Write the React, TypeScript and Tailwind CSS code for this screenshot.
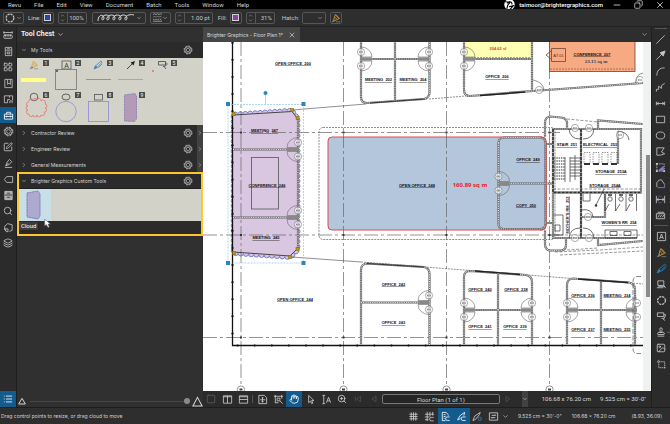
import type { ReactNode } from "react";
import {
  ChevronDown, ChevronRight, ChevronUp, Copy, Hand, Image as ImageIcon, Layers,
  LayoutGrid, List, Minus, RulerDimensionLine, Search, Square, Stamp, SquarePen, X, ZoomIn,
} from "lucide-react";

const ui = "font-['Roboto',sans-serif] text-[6px] leading-[8px]";
const small = "font-['Inter','Roboto',sans-serif] text-[5px] leading-[8px]";

function Glyph({ children, className = "size-[11px]" }: { children: ReactNode; className?: string }) {
  return (
    <svg viewBox="0 0 12 12" fill="none" stroke="currentColor" strokeWidth="0.9" className={"shrink-0 " + className} aria-hidden="true">
      {children}
    </svg>
  );
}

function Gear({ className }: { className?: string }) {
  return (
    <Glyph className={className}>
      <circle cx="6" cy="6" r="4.8" strokeWidth="0.9" strokeDasharray="2.2 1.57" />
      <circle cx="6" cy="6" r="4" strokeWidth="0.9" />
      <circle cx="6" cy="6" r="2.1" strokeWidth="0.8" />
    </Glyph>
  );
}

function Highlighter({ className }: { className?: string }) {
  return (
    <Glyph className={className}>
      <path d="M5 2 L9.5 7 L4.5 9 L3.3 7.5 Z" stroke="#d9a032" />
      <path d="M4.3 4.5 L7.2 7.8 M5.6 1.5 L10.6 7" stroke="#d9a032" />
      <path d="M1.5 10.5 L3.5 7.8 L5 9.4 Z M6 10.6 H11" stroke="#8a867c" fill="#8a867c" />
    </Glyph>
  );
}

function BluePen({ className }: { className?: string }) {
  return (
    <Glyph className={className}>
      <path d="M3 7 L9.5 1.2 L10.8 2.5 L5 9 Z M6.5 9 L11 4.5" stroke="#2b84c6" />
      <path d="M3 7 L5 9 L1.2 10.8 Z" fill="#2b84c6" stroke="#2b84c6" />
    </Glyph>
  );
}

/* ---------- Top bars ---------- */

function MenuBar() {
  const menus = ["Revu", "File", "Edit", "View", "Document", "Batch", "Tools", "Window", "Help"];
  return (
    <header className={"flex h-[9px] shrink-0 items-center bg-black text-[#d6d6d6] " + ui}>
      <nav className="flex gap-[13px] pl-2">
        {menus.map((m) => (
          <button key={m} type="button">{m}</button>
        ))}
      </nav>
      <div className="ml-auto flex items-center pr-[5px]">
        <svg viewBox="0 0 20 20" className="mr-[4px] size-[11px]" aria-hidden="true">
          <circle cx="10" cy="10" r="9.5" fill="#fff" />
          <path d="M2 5 L11 6 L7 11 L5 18 M6 8 C10 3 16 6 14 10 M9 14 L17 12 L11 19" stroke="#000" strokeWidth="2" fill="none" />
        </svg>
        <span className="mr-[9px] font-medium text-white">taimoor@brightergraphics.com</span>
        <button type="button" aria-label="Minimize" className="mr-[12px]"><Minus className="size-[10px]" /></button>
        <button type="button" aria-label="Restore" className="mr-[12px]"><Copy className="size-[9px] -scale-x-100" /></button>
        <button type="button" aria-label="Close"><X className="size-[10px]" /></button>
      </div>
    </header>
  );
}

const box = "flex h-[12px] shrink-0 items-center rounded-[2px] border border-[#565656]";

function Spinner({ label, value, width }: { label: string; value: string; width: string }) {
  return (
    <div className={box + " " + width}>
      <button type="button" aria-label={"Adjust " + label} className="flex h-full w-[9px] shrink-0 flex-col items-center justify-center border-r border-[#565656]">
        <ChevronUp className="size-[5px]" />
        <ChevronDown className="size-[5px]" />
      </button>
      <input aria-label={label} defaultValue={value} className="w-full min-w-0 bg-transparent pr-[2px] text-right outline-none" />
    </div>
  );
}

function PropertyBar() {
  return (
    <div className={"flex h-[18px] shrink-0 items-center gap-[4px] border-b border-[#222] bg-[#2e2e2e] pl-[3px] text-[#c8c8c8] " + ui}>
      <button type="button" aria-label="Shape" className={box + " w-[21px] justify-between px-px"}>
        <Glyph className="size-[10px]"><circle cx="6" cy="6" r="4.6" strokeWidth="1.5" strokeDasharray="2.6 1" /></Glyph>
        <ChevronDown className="size-[6px]" />
      </button>
      <span>Line:</span>
      <button type="button" aria-label="Line color" className={box + " -ml-[3px] w-[12px] justify-center"}>
        <span className="size-[7px] border border-[#d0d0d0] bg-[#2448a8]" />
      </button>
      <Spinner label="Line opacity" value="100%" width="w-[29px]" />
      <button type="button" aria-label="Line style" className={box + " ml-px w-[54px] justify-between pr-[3px] pl-[4px]"}>
        <svg viewBox="0 0 38 8" className="h-[8px] w-[38px]" fill="none" stroke="#ddd" aria-hidden="true">
          <path d="M1 7 C1 0 7 0 7 4 C7 7 4 6 5 4 C6 0 13 0 12 4 C12 7 9 6 10 4 C11 0 18 0 18 4 C18 7 15 6 16 4 C17 0 24 0 24 4 C24 7 21 6 22 4 C23 0 30 0 30 4 C30 7 27 6 28 4 C29 1 34 0 37 1" />
        </svg>
        <ChevronDown className="size-[6px]" />
      </button>
      <button type="button" aria-label="Line weight pattern" className={box + " w-[21px] justify-between px-[2px]"}>
        <Glyph className="size-[9px]"><path d="M0 2 l2 -1 l2 1 l2 -1 l2 1 l2 -1 l2 1 M0 11 H12" /><path d="M0 6 l2 -2 l2 2 l2 -2 l2 2 l2 -2 l2 2 M0 8.5 h12" strokeDasharray="2 1" /></Glyph>
        <ChevronDown className="size-[6px]" />
      </button>
      <Spinner label="Line width" value="1.00 pt" width="w-[38px]" />
      <span className="ml-px">Fill:</span>
      <button type="button" aria-label="Fill color" className={box + " -ml-px w-[12px] justify-center"}>
        <span className="size-[7px] border border-[#d0d0d0] bg-[#8c3fa5]" />
      </button>
      <Spinner label="Fill opacity" value="31%" width="w-[29px]" />
      <label htmlFor="hatch" className="ml-[3px]">Hatch:</label>
      <div className={box + " -ml-px w-[24px] pr-[2px]"}>
        <select id="hatch" className="h-full w-full min-w-0 appearance-none bg-transparent outline-none"><option /></select>
        <ChevronDown className="pointer-events-none size-[6px] shrink-0" />
      </div>
      <button type="button" aria-label="Set as default" className={box + " w-[12px] justify-center"}>
        <Highlighter className="size-[10px]" />
      </button>
    </div>
  );
}

/* ---------- Left side ---------- */

function LeftRail() {
  const ic = "size-[10px]";
  const items: [string, ReactNode][] = [
    ["Measurements", <RulerDimensionLine className={ic} />],
    ["File access", <Glyph><path d="M2.5 1.5 H9.5 V10.5 H2.5 Z M2.5 4.5 H9.5 M4.5 3 H7.5 M4.5 6.5 H7.5 V8.5 H4.5 Z" /></Glyph>],
    ["Thumbnails", <LayoutGrid className={ic} />],
    ["Bookmarks", <Glyph><path d="M2 1.5 H10 V10.5 H2 Z M5 1.5 V7 L6.5 5.5 L8 7 V1.5" /></Glyph>],
    ["Spaces", <Glyph><path d="M1.5 2 H10.5 V7 M1.5 2 V9.5 H5 V6 H7.5 M7 2 V4 M10 10 V7.5 H7.5 V10" /></Glyph>],
    ["Tool Chest", <Glyph><path d="M1.5 4.5 H10.5 V10 H1.5 Z M4 4.5 V2.5 H8 V4.5 M1.5 7 H10.5 M4 6.2 V8 M8 6.2 V8" /></Glyph>],
    ["Properties", <Gear />],
    ["Forms", <SquarePen className={ic} />],
    ["Signatures", <Glyph><path d="M2 10.3 H10 M3 8.5 L4.5 4.5 L7 1.5 L9.5 4 L7 7 Z M3 8.5 L6 5.3" /></Glyph>],
    ["Links", <Glyph><path d="M1.5 6 L4 2.8 H10.5 V9.2 H4 Z" /></Glyph>],
    ["Studio", <Glyph><path d="M2 1.5 H10 V10.5 H2 Z" fill="#aaa" /><path d="M2 5.5 H10 M4.5 3.5 H7.5 M4.5 8 H7.5" stroke="#333" /></Glyph>],
    ["Search", <Search className={ic} />],
    ["Compare", <Glyph><path d="M3.5 9.5 A4.5 4.5 0 0 1 2 4.5 L5 1.8 L10 3 V9 L7 10.3 M1.5 7.5 H5.5 V10.5 H3.5 Z" /></Glyph>],
    ["Layers", <Layers className={ic} />],
  ];
  return (
    <nav className="flex w-4 shrink-0 flex-col bg-[#2b2b2b] text-[#c4c4c4]">
      {items.map(([label, icon]) => (
        <button key={label} type="button" aria-label={label} className={"flex h-4 w-full items-center justify-center " + (label === "Tool Chest" ? "bg-[#135a8d] text-white" : "")}>
          {icon}
        </button>
      ))}
      <button type="button" aria-label="Markups list" className="mt-auto flex h-4 w-full items-center justify-center bg-[#135a8d] text-white">
        <List className={ic} />
      </button>
    </nav>
  );
}

const toolArt: [string, ReactNode][] = [
  ["Highlight", <><svg x="11" y="2" width="10" height="10"><Highlighter className="size-[10px]" /></svg><rect x="3" y="20" width="25" height="4" fill="#ffff8c" /></>],
  ["Text box", <><rect x="12" y="3" width="9" height="8" stroke="#555" /><text x="16.5" y="9.5" textAnchor="middle" className="fill-[#333] font-['Roboto',sans-serif] text-[7px]">A</text><rect x="5.5" y="11.5" width="21" height="20" stroke="#77776f" /><path d="M6 12 h2 v2 h-2z" fill="#666" /></>],
  ["Pen", <><svg x="11" y="2" width="10" height="10"><BluePen className="size-[10px]" /></svg><path d="M4 21.5 H29" stroke="#e8706c" strokeWidth="1" /></>],
  ["Arrow", <><path d="M13 11 L19 5" stroke="#222" /><path d="M21 3 L16.5 4.5 L19.5 7.5 Z" fill="#222" /><path d="M4 21.5 H29" stroke="#e58f88" strokeWidth="1" /></>],
  ["Callout", <><path d="M12.5 3.5 H19.5 V7 H12.5 Z M19.5 5 C23 5 20 9 17 8.5 M18 8.5 L20 11" stroke="#444" /><circle cx="7" cy="13" r="1" fill="#ee6a66" /></>],
  ["Cloud", <><circle cx="16" cy="7" r="3.8" stroke="#444" /><path d="M11 11 a2 2 0 0 1 4 0 a2 2 0 0 1 4 -1 a2 2 0 0 1 4 1 a2 2 0 0 1 4 3 a2 2 0 0 1 0 4 a2 2 0 0 1 -1 4 a2 2 0 0 1 -3 3 a2 2 0 0 1 -4 0 a2 2 0 0 1 -4 0 a2 2 0 0 1 -4 -1 a2 2 0 0 1 -1 -4 a2 2 0 0 1 0 -4 a2 2 0 0 1 1 -4" stroke="#e8706c" /></>],
  ["Ellipse", <><ellipse cx="16" cy="7" rx="4" ry="3" stroke="#444" /><circle cx="16" cy="21.5" r="10.2" stroke="#8a8ad8" /></>],
  ["Rectangle", <><rect x="12.5" y="4.5" width="8" height="5.5" stroke="#555" /><rect x="6.5" y="11.5" width="20" height="20" stroke="#8a8ad8" /></>],
  ["Custom cloud", <path d="M10.5 5 L21 3.5 L22.5 6 V29 L20.5 31.5 L10.5 31 Z" fill="#b49ab6" stroke="#7d7bb4" strokeDasharray="2 0.6" />],
];

function SectionHeader({ title, open = false, handle = false, framed = false }: { title: string; open?: boolean; handle?: boolean; framed?: boolean }) {
  const Chevron = open ? ChevronDown : ChevronRight;
  return (
    <div className={"flex items-center bg-[#2b2b2b] " + (framed ? "h-[14px]" : "h-4")}>
      <button type="button" aria-expanded={open} className={"flex flex-1 items-center gap-[4px] text-left text-[#d4d4d4] " + small + (framed ? " pl-[2px]" : " pl-[4px]")}>
        <Chevron className="size-[6px]" />
        {title}
      </button>
      <button type="button" aria-label={title + " settings"} className="mr-[4px] text-[#c9c9c9]"><Gear className="size-[10px]" /></button>
      {handle ? (
        <span className="flex h-full w-[6px] items-center justify-center bg-[#414141] text-[#c9c9c9]"><ChevronRight className="size-[6px]" /></span>
      ) : (
        <span className={framed ? "w-[4px]" : "w-[6px]"} />
      )}
    </div>
  );
}

function ToolChest() {
  return (
    <aside className="flex w-[187px] shrink-0 flex-col border-l border-[#1f1f1f] bg-[#303030]">
      <button type="button" className="flex h-[15px] shrink-0 items-center gap-[2px] pl-[4px] font-['Roboto',sans-serif] text-[7px] leading-[9px] font-bold text-[#eee]">
        Tool Chest <ChevronDown className="size-[7px]" />
      </button>
      <div className="flex flex-col">
        <SectionHeader title="My Tools" open />
        <div className="grid grid-cols-[repeat(5,32px)] bg-[#d3d2c8] pb-[3px] pl-px">
          {toolArt.map(([label, art], i) => (
            <button key={label} type="button" aria-label={label} className="h-8 w-8">
              <svg viewBox="0 0 32 32" className="size-8 overflow-visible" fill="none" strokeWidth="0.8" aria-hidden="true">
                {art}
                <rect x="25" y="2" width="6" height="6" fill="#4a4a48" />
                <text x="28" y="6.6" textAnchor="middle" className="fill-white font-['Roboto',sans-serif] text-[5px]">{i + 1}</text>
              </svg>
            </button>
          ))}
        </div>
        <SectionHeader title="Contractor Review" handle />
        <SectionHeader title="Engineer Review" handle />
        <SectionHeader title="General Measurements" handle />
      </div>
      <section className="-mt-px flex flex-col border-2 border-[#fdc52f] bg-[#2b2b2b] pb-[13px]">
        <SectionHeader title="Brighter Graphics Custom Tools" open framed />
        <div className="relative flex border-t border-[#1f1f1f] bg-[#d3d2c8]">
          <button type="button" aria-label="Cloud" className="size-8 bg-[#c9dfe8]">
            <svg viewBox="0 0 32 32" className="size-8" aria-hidden="true">
              <path d="M8 4 L19 2 L21 5 V27 L19 30 L8 28 Z" fill="#aea9cf" stroke="#7b80bb" strokeDasharray="2 0.5" />
            </svg>
          </button>
          <svg viewBox="0 0 12 16" className="absolute top-[30px] left-[25px] z-10 h-[9px] w-[7px]" aria-hidden="true">
            <path d="M1 0 V12 L4 10 L7 15 L9 14 L7 9 H11 Z" fill="#fff" stroke="#666" />
          </svg>
          <span role="tooltip" className={"absolute top-[33px] left-0 bg-[#3d3d3d] px-[2px] text-white shadow " + ui}>Cloud</span>
        </div>
      </section>
      <div className="mt-auto flex h-[12px] items-center gap-[4px] pl-px text-[#d5d5d5]">
        <Glyph className="size-[8px]"><path d="M6 2 L11 10.5 H1 Z" strokeWidth="1.5" /></Glyph>
        <input type="range" aria-label="Thumbnail size" defaultValue={100} className="h-[7px] min-w-0 flex-1 appearance-none bg-transparent [&::-webkit-slider-runnable-track]:h-px [&::-webkit-slider-runnable-track]:bg-[#474747] [&::-webkit-slider-thumb]:-mt-[3px] [&::-webkit-slider-thumb]:size-[6px] [&::-webkit-slider-thumb]:appearance-none [&::-webkit-slider-thumb]:rounded-full [&::-webkit-slider-thumb]:bg-[#8a8a8a]" />
        <Glyph className="-ml-[2px] size-[11px]"><path d="M6 1.5 L11 11 H1 Z" strokeWidth="1.1" /></Glyph>
      </div>
    </aside>
  );
}

/* ---------- Floor plan drawing ---------- */

function Wall({ d }: { d: string }) {
  return (
    <g fill="none">
      <path d={d} stroke="#646464" strokeWidth="2.2" />
      <path d={d} stroke="#dcdcdc" strokeWidth="1.2" strokeDasharray="1 0.8" />
    </g>
  );
}

function Room({ x, y, children, rotate = false }: { x: number; y: number; children: string; rotate?: boolean }) {
  return (
    <text
      x={x} y={y + 1.5} textAnchor="middle" fill="#111" textDecoration="underline" xmlSpace="preserve"
      transform={rotate ? `rotate(-90 ${x} ${y})` : undefined}
      className="font-['Liberation_Sans',sans-serif] text-[4px] font-bold whitespace-pre"
    >
      {children}
    </text>
  );
}

function DoorTag({ x, y }: { x: number; y: number }) {
  return (
    <g>
      <circle cx={x} cy={y} r="3.6" fill="#fff" fillOpacity="0.6" stroke="#777" strokeWidth="0.6" />
      <path d={`M${x - 2} ${y} H${x + 2}`} stroke="#888" strokeWidth="1.3" strokeDasharray="1 0.4" />
    </g>
  );
}

/* A pair of doors hung on both sides of a partition; dir 1 opens right, -1 opens left. */
function Doors({ x, y, dir }: { x: number; y: number; dir: 1 | -1 }) {
  const e = x + dir * 11;
  const s = dir === 1 ? 1 : 0;
  return (
    <g fill="none" stroke="#666" strokeWidth="0.6">
      <path d={`M${x} ${y - 12} A11 10 0 0 ${s} ${e} ${y - 2} H${x} M${x} ${y + 12} A11 10 0 0 ${1 - s} ${e} ${y + 2} H${x}`} />
      <path d={`M${x} ${y} H${e}`} stroke="#888" strokeWidth="3.4" />
      <DoorTag x={x} y={y - 7} />
      <DoorTag x={x} y={y + 7} />
    </g>
  );
}

const zone: [number, number][] = [[233, 114], [292, 110], [298, 118], [298, 249], [290, 257], [233, 253]];

function scallops(points: [number, number][]) {
  let d = `M${points[0][0]} ${points[0][1]}`;
  points.forEach(([x0, y0], i) => {
    const [x1, y1] = points[(i + 1) % points.length];
    const n = Math.max(1, Math.round(Math.hypot(x1 - x0, y1 - y0) / 5));
    for (let k = 1; k <= n; k++) {
      d += ` A2.6 2.6 0 0 1 ${x0 + ((x1 - x0) * k) / n} ${y0 + ((y1 - y0) * k) / n}`;
    }
  });
  return d + " Z";
}

function FloorPlan() {
  const columns = [241, 343.5, 446.5, 549.5];
  const rows = [132.5, 235, 337.5];
  return (
    <svg viewBox="203 42 440 349" preserveAspectRatio="xMinYMin slice" className="block h-full w-full bg-white" role="img" aria-label="Floor plan">
      {/* tinted areas */}
      <rect x="464" y="42" width="68" height="17" fill="#ffffb4" />
      <rect x="549.5" y="40" width="85.5" height="31.5" fill="#f7a981" stroke="#6b4636" strokeWidth="0.8" />
      <path d="M550 69 H635" stroke="#7a4c38" strokeWidth="0.6" strokeDasharray="2 1" />
      <rect x="328" y="137" width="218" height="93" rx="4" fill="#b3c6dc" stroke="#e5484d" />
      <path d={scallops(zone)} fill="#d9c7e2" stroke="#6a74c4" strokeWidth="0.9" />

      {/* structural grid */}
      <g stroke="#666" strokeWidth="0.7" strokeDasharray="14 3 3 3">
        {columns.map((x) => <path key={x} d={`M${x} 42 V386`} />)}
        {rows.map((y) => <path key={y} d={`M203 ${y} H${y > 300 ? 643 : 560}`} />)}
      </g>
      {columns.map((x) => (
        <g key={x}>
          <circle cx={x} cy="389.5" r="3.6" fill="#fff" stroke="#666" strokeWidth="0.7" />
          <path d={`M${x - 1.5} 389.5 H${x + 1.5}`} stroke="#444" strokeWidth="2" />
          {rows.map((y) => <path key={y} d={`M${x - 1} ${y - 1} h2 v2 h-2 z`} fill="#333" />)}
        </g>
      ))}

      {/* outer walls */}
      <path d="M232.5 42 V345.5 H643" fill="none" stroke="#111" strokeWidth="1.3" />
      <path d="M232.5 42 V345.5 H643" fill="none" stroke="#111" strokeWidth="2.2" strokeDasharray="1.5 15.6" />
      <g fill="none" stroke="#444" strokeWidth="0.6">
        <path d="M292 110 L366 104 M292 257 L361 262" />
        <path d="M429 99 L466 96 M361 262 L643 284" strokeDasharray="2 1" />
        <rect x="319" y="127.5" width="236" height="112" rx="4" strokeDasharray="2 1" />
      </g>

      {/* selected zone contents */}
      <Wall d="M233 149.5 H298 M233 217.5 H298 M298 118 V249" />
      <path d="M233 115 L292 111.5 L297 118 M297 249 L290 256 L233 252" fill="none" stroke="#444" />
      <rect x="251.5" y="157.5" width="27" height="51.5" fill="none" stroke="#555" strokeWidth="0.8" />
      <Doors x={298} y={149.5} dir={-1} />
      <Doors x={298} y={217.5} dir={-1} />

      {/* north rooms */}
      <Wall d="M361 42 V97 Q361 103 367 103 L424 99 Q429.5 98 429.5 92 V42 M395 42 V101 M361 59 H429" />
      <path d="M370 103 L424 99" stroke="#333" />
      <Doors x={361} y={59} dir={1} />
      <Doors x={429} y={59} dir={-1} />
      <Wall d="M464 42 V90 Q464 96 470 96 L532 91 V42 M464 59 H532 M533 91 L643 83" />
      <path d="M480 95.5 L525 92" stroke="#222" strokeWidth="1.5" />
      <path d="M465 57.5 H531" stroke="#c77" strokeWidth="0.8" strokeDasharray="2 1" />
      <Doors x={464} y={59} dir={1} />
      <path d="M533 80 Q543 82 544 90 M643 73 Q636 74 635.5 83" fill="none" stroke="#666" strokeWidth="0.7" />
      <DoorTag x={539} y={90} />
      <DoorTag x={640} y={80} />
      <path d="M551.5 48.5 H565.5 V61.5 H551.5 Z M551 51 L546 55 L551 59" fill="none" stroke="#6b4636" strokeWidth="0.8" />

      {/* middle rooms */}
      <Wall d="M498.5 143 Q498.5 137.5 504 137.5 H540 Q545.5 138 545.5 143 V224 Q545 229 540 229 H504 Q498.5 229 498.5 224 Z M498.5 183.5 H553" />
      <Doors x={498.5} y={183.5} dir={1} />
      <path d="M540 137 Q546 137 546 143 V224 Q546 230 540 230" fill="none" stroke="#e5484d" />

      {/* service core */}
      <Wall d="M567 128 V122 Q566 118 561 117.5 L550 116.5 Q545 117 545 123 V137 M545 230 V244 Q545 250 550 250.5 H561 Q566 250 566 245 V239 M545 144 H553 M545 223 H553 M643 124 L598 120.5 V128 M643 241 L598 245 V239" />
      <Wall d="M553 129 H641 V192.5 H553 Z V238 H637 M581 129 V238 M618 131 V164 M605 193 V217 H581" />
      <path d="M553 129 V192.5 H641 M581 129 V238" fill="none" stroke="#333" strokeWidth="1.6" strokeDasharray="3 1" />
      <g fill="none" stroke="#333" strokeWidth="0.7">
        <path d="M567 119 L598 122 M567 250 L598 248 M555 252 L600 250 L643 247 M560 255 L643 251 M553 189 H641 M547 235 H643" strokeDasharray="3 1.5" strokeWidth="0.5" />
        <path d="M554 158 H565 M554 161 H565 M554 164 H565 M554 167 H565 M554 170 H565 M554 173 H565 M554 176 H565 M554 179 H565" strokeWidth="1.2" strokeDasharray="1.5 0.8" />
        <path d="M570 158 H580 M570 161 H580 M570 164 H580 M570 167 H580 M570 170 H580 M570 173 H580 M570 176 H580 M570 157 V182 M575 155 V180 M565 157 V182" />
        <path d="M584 152.5 H590 V164 H584 Z M593 152.5 H599 V164 H593 Z M602 152.5 H608 V164 H602 Z M611 152.5 H617 V164 H611 Z" strokeDasharray="1.5 1" strokeWidth="0.5" />
        <path d="M584 164 H590 M593 164 H599 M602 164 H608 M611 164 H617" strokeWidth="2" />
        <path d="M605 194 V211 M615.5 194 V211 M626 194 V211 M636.5 194 V211 M605 211 L609 204 M615.5 211 L620 204 M626 211 L630 204" />
        <circle cx="610" cy="199" r="2.2" /><circle cx="621" cy="199" r="2.2" /><circle cx="631" cy="199" r="2.2" />
        <path d="M608 195 h4 M619 195 h4 M629 195 h4" strokeWidth="1.5" />
        <path d="M605 230 H637 V238 H605 Z M610 231.5 h7 v4 h-7 z M624 231.5 h7 v4 h-7 z M554 215 h9 v20 h-9 M555 225 h5 v6 h-5 z" />
        <path d="M604 189 L596 205 M583 194 V201 H590 V194 M618 131 Q628 132 629 140 M581 210 Q592 208 593 217" />
        <circle cx="596" cy="205.5" r="0.9" fill="#111" />
        <path d="M569 129 Q570 139 580 139 M583 139 Q593 139 594 129 M569 238 Q570 228 580 228 M583 228 Q593 228 594 238" />
      </g>
      <DoorTag x={575} y={128} /><DoorTag x={589} y={128} /><DoorTag x={620} y={135} />
      <DoorTag x={588} y={217} /><DoorTag x={575} y={238} /><DoorTag x={589} y={238} />

      {/* south rooms */}
      <Wall d="M361 345 V270 Q361 264 367 263.5 L424 267 Q429.5 268 429.5 274 V345 M361 302.5 H429" />
      <path d="M367 263.5 L424 267" stroke="#333" />
      <Doors x={429} y={302.5} dir={-1} />
      <Wall d="M464 345 V277 Q464 271 470 271 L526 275 Q532 276 532 282 V345 M498 273 V345 M464 310 H532" />
      <path d="M475 271 L520 274.5" stroke="#222" strokeWidth="1.3" />
      <Doors x={464} y={310} dir={1} />
      <Doors x={532} y={310} dir={-1} />
      <Wall d="M567 345 V285 Q567 279 573 278.5 L629 282.5 Q635 284 635 289 V345 M601 281 V345 M567 310 H635" />
      <path d="M578 279 L628 282.5" stroke="#222" strokeWidth="1.3" />
      <Doors x={567} y={310} dir={1} />
      <Doors x={637} y={310} dir={-1} />
      <path d="M641 276.5 H637 Q633 277 633 281 V349 Q633 353 637 353.5 H641" fill="none" stroke="#555" strokeWidth="0.7" strokeDasharray="5 1.5" />

      {/* labels */}
      <Room x={293} y={63}>{"OPEN OFFICE  200"}</Room>
      <Room x={378.5} y={79.5}>{"MEETING  202"}</Room>
      <Room x={413} y={79.5}>{"MEETING  204"}</Room>
      <Room x={497} y={76.5}>{"OFFICE  206"}</Room>
      <Room x={592} y={54}>{"CONFERENCE  207"}</Room>
      <Room x={264.5} y={130.5}>{"MEETING  247"}</Room>
      <Room x={267} y={185}>{"CONFERENCE  246"}</Room>
      <Room x={266} y={237.5}>{"MEETING  245"}</Room>
      <Room x={417} y={185}>{"OPEN OFFICE  248"}</Room>
      <Room x={528} y={159.5}>{"OFFICE  249"}</Room>
      <Room x={526} y={205}>{"COPY  250"}</Room>
      <Room x={567} y={144.5}>{"STAIR  251"}</Room>
      <Room x={600} y={144.5}>{"ELECTRICAL  253"}</Room>
      <Room x={611} y={171.5}>{"STORAGE  253A"}</Room>
      <Room x={605} y={185}>{"STORAGE  254A"}</Room>
      <Room x={619} y={222.5}>{"WOMEN'S RR  254"}</Room>
      <Room x={567} y={215} rotate>{"MOTHER'S RM  252"}</Room>
      <Room x={295} y={299}>{"OPEN OFFICE  244"}</Room>
      <Room x={393.5} y={284}>{"OFFICE  242"}</Room>
      <Room x={393.5} y={322.5}>{"OFFICE  243"}</Room>
      <Room x={480} y={289}>{"OFFICE  240"}</Room>
      <Room x={516} y={289}>{"OFFICE  238"}</Room>
      <Room x={480} y={326.5}>{"OFFICE  241"}</Room>
      <Room x={515} y={326.5}>{"OFFICE  239"}</Room>
      <Room x={583} y={295}>{"OFFICE  236"}</Room>
      <Room x={617} y={295}>{"MEETING  234"}</Room>
      <Room x={583} y={329}>{"OFFICE  237"}</Room>
      <Room x={617} y={329}>{"MEETING  235"}</Room>
      <text x="498" y="50" textAnchor="middle" className="fill-[#e03c31] font-['Liberation_Sans',sans-serif] text-[4px] font-bold">204.62 sf</text>
      <text x="596" y="63" textAnchor="middle" className="fill-[#2c4a66] font-['Liberation_Serif',serif] text-[5px] font-bold">23.15 sq m</text>
      <text x="558.5" y="56.5" textAnchor="middle" className="fill-[#4a2c20] font-['Liberation_Sans',sans-serif] text-[4px]">A7.01</text>
      <text x="470" y="187" textAnchor="middle" className="fill-[#ee1c25] font-['Open_Sans',sans-serif] text-[6px] font-bold">160.89 sq m</text>

      {/* selection frame and handles */}
      <rect x="228" y="104.5" width="75.5" height="158.5" fill="none" stroke="#8cc4ea" strokeWidth="0.7" strokeDasharray="2 1" />
      <path d="M265.5 94 V104" stroke="#8cc4ea" strokeWidth="0.7" />
      <circle cx="265.5" cy="93" r="2" fill="#2f84c0" />
      {[[228, 104], [303.5, 104], [228, 263], [303.5, 263]].map(([x, y]) => (
        <rect key={x + "-" + y} x={x - 2} y={y - 2} width="4" height="4" fill="#2f84c0" />
      ))}
      {[[233.5, 114], [292, 110], [297.5, 118], [297.5, 249], [290, 257], [234, 253]].map(([x, y]) => (
        <rect key={x + "-" + y} x={x - 1.5} y={y - 1.5} width="3.2" height="3.2" fill="#b8921c" stroke="#7d6210" strokeWidth="0.5" />
      ))}
    </svg>
  );
}

/* ---------- Document area ---------- */

function NavButton({ label, active = false, dim = false, children }: { label: string; active?: boolean; dim?: boolean; children: ReactNode }) {
  return (
    <button type="button" aria-label={label} className={"flex h-4 w-4 shrink-0 items-center justify-center " + (active ? "bg-[#135a8d] text-white" : dim ? "text-[#5c5c5c]" : "text-[#cfcfcf]")}>
      {children}
    </button>
  );
}

function NavigationBar() {
  const ic = "size-[10px]";
  return (
    <div className={"flex h-4 shrink-0 items-center bg-[#2b2b2b] text-[#d8d8d8] " + ui}>
      <NavButton label="Unsplit" dim><Square className={ic} /></NavButton>
      <NavButton label="Split vertical"><Glyph><path d="M1.5 2 H10.5 V10 H1.5 Z M6 2 V10 M1.5 3 H10.5" /></Glyph></NavButton>
      <NavButton label="Split horizontal"><Glyph><path d="M1.5 2 H10.5 V10 H1.5 Z M1.5 6 H10.5 M1.5 3 H10.5" /></Glyph></NavButton>
      <span className="mx-px h-[8px] w-px bg-[#555]" />
      <NavButton label="Fit page"><Glyph><path d="M2 1.5 H8 L10.5 4 V10.5 H2 Z M6 3.5 V9 M3.5 6.3 H9 M5 4.5 L6 3.5 L7 4.5 M5 8 L6 9 L7 8" /></Glyph></NavButton>
      <NavButton label="Fit content"><Glyph><path d="M1 2.5 H11 M2.5 1 V10 M9.5 1 V5 M2.5 9.5 H6 M4.5 4.5 H7.5 V7.5 H4.5 Z M7.5 7.5 L10.5 10.5" /></Glyph></NavButton>
      <NavButton label="Pan" active><Hand className={ic} /></NavButton>
      <NavButton label="Select"><Glyph><path d="M4 1.5 V9.5 L6 7.8 L7.3 10.5 L8.5 10 L7.3 7.2 H9.8 Z" /></Glyph></NavButton>
      <NavButton label="Select text"><Glyph><path d="M1.5 1.5 H4.5 M3 1.5 V10.5 M1.5 10.5 H4.5 M6 9.5 L8.2 3.5 L10.5 9.5 M6.8 7.5 H9.7" /></Glyph></NavButton>
      <NavButton label="Zoom"><ZoomIn className={ic} /></NavButton>
      <NavButton label="First page" dim><Glyph className="size-[8px]"><path d="M2 2 V10 M10 2 L4 6 L10 10 Z" /></Glyph></NavButton>
      <NavButton label="Previous page" dim><Glyph className="size-[8px]"><path d="M9 2 L3 6 L9 10 Z" /></Glyph></NavButton>
      <input aria-label="Page" defaultValue="Floor Plan (1 of 1)" className="h-[10px] min-w-0 flex-1 rounded-[2px] border border-[#777] bg-[#262626] text-center outline-none" />
      <NavButton label="Next page" dim><Glyph className="size-[8px]"><path d="M3 2 L9 6 L3 10 Z" /></Glyph></NavButton>
      <button type="button" aria-label="More pages" className="ml-[6px] flex h-full w-[6px] items-center justify-center bg-[#414141]"><ChevronDown className="size-[6px]" /></button>
      <span className="ml-[14px]">106.68 x 76.20 cm</span>
      <span className="mr-[5px] ml-[9px]">9.525 cm = 30'-0"</span>
    </div>
  );
}

function DocumentArea() {
  return (
    <main className="flex min-w-0 flex-1 flex-col">
      <div className="flex h-[15px] shrink-0 items-stretch bg-[#2e2e2e]">
        <div className={"flex items-center bg-[#474747] pr-[4px] pl-[4px] text-[#dadada] " + small}>
          <button type="button">Brighter Graphics - Floor Plan 1*</button>
          <button type="button" aria-label="Close tab" className="ml-[5px]"><X className="size-[8px]" /></button>
        </div>
        <button type="button" aria-label="Open documents" className="mr-[3px] ml-auto text-[#ccc]"><ChevronDown className="size-[7px]" /></button>
      </div>
      <div className="flex min-h-0 flex-1">
        <div className="min-w-0 flex-1"><FloorPlan /></div>
        <div className="w-2 shrink-0 bg-[#f0f1f1] pl-[3px]">
          <div className="mt-[113px] h-[142px] w-[4px] bg-[#8b8b8b]" />
        </div>
      </div>
      <NavigationBar />
    </main>
  );
}

function RightRail() {
  const ic = "size-[10px]";
  const corner = <path d="M1 1 h2 v2 h-2z M1 9 h2 v2 h-2z M9 9 h2 v2 h-2z" fill="currentColor" stroke="none" />;
  const shapes: [string, ReactNode][] = [
    ["Line", <Glyph><path d="M1.5 10.5 L10.5 1.5" /></Glyph>],
    ["Arrow", <Glyph><path d="M1.5 10.5 L8 4" /><path d="M11 1 L5.5 3 L9 6.5 Z" fill="currentColor" /></Glyph>],
    ["Arc", <Glyph><path d="M2 10.5 C2 5 5 2 10.5 2" /></Glyph>],
    ["Polyline", <Glyph><path d="M1.5 10.5 V8 H4 V4.5 L7 7 V4 L10.5 1.5" /></Glyph>],
    ["Dimension", <Glyph><path d="M1.5 4 V8 M10.5 4 V8 M2 6 H10 M4 4.8 L2 6 L4 7.2 M8 4.8 L10 6 L8 7.2" /></Glyph>],
    ["Rectangle", <Glyph><path d="M1.5 2.5 H10.5 V9.5 H1.5 Z" /></Glyph>],
    ["Ellipse", <Glyph><ellipse cx="6" cy="6" rx="4.6" ry="3.8" /></Glyph>],
    ["Polygon", <Glyph><path d="M2 2 H10 L7 6.5 L10.5 8.5 L6 10 H2 Z" /></Glyph>],
    ["Area measurement", <Glyph><path d="M2 2 H10 V10 H2 Z" strokeDasharray="1.5 1" /><path d="M4 9 L9 9 L9 5 Z" stroke="#8d7bd8" fill="#8d7bd8" />{corner}</Glyph>],
    ["Perimeter", <Glyph><path d="M2 10 V5 L5 2 H7 L10.5 7" /><path d="M3 10.5 H10.5 V7" stroke="#8d7bd8" /></Glyph>],
    ["Length", <Glyph><path d="M1.5 2 V10 M10.5 2 V10 M2 6 H10 M4 4.5 L2 6 L4 7.5 M8 4.5 L10 6 L8 7.5" /><path d="M4 2.5 H8 M4 9.5 H8" stroke="#8d7bd8" strokeDasharray="1 1" /></Glyph>],
    ["Count", <Glyph><path d="M1.5 4 H10.5 V9.5 H1.5 Z M3 8 L5 5 M5.5 8 L7.5 5 M8 8 L10 5 M3 2.5 H10" /></Glyph>],
  ];
  const markups: [string, ReactNode][] = [
    ["Text box", <Glyph><path d="M1.5 1.5 H10.5 V10.5 H1.5 Z M4 8.7 L6 3.3 L8 8.7 M4.7 7 H7.3" /></Glyph>],
    ["Highlight", <Highlighter />],
    ["Pen", <BluePen />],
    ["Typewriter", <Glyph><path d="M2 2 H8.5 V7 H2 Z M1 9.5 H8 M8.5 7 L10.5 10 M2.5 8 H10" /></Glyph>],
    ["Cloud", <Glyph><circle cx="6" cy="6" r="4.3" strokeWidth="1.3" strokeDasharray="2.6 0.8" /></Glyph>],
    ["Callout", <Glyph><path d="M1.5 2 H8.5 V6 H1.5 Z M8.5 4 H10.5 L9 8 H6 M7.5 8.5 L10 10.5" /></Glyph>],
    ["Stamp", <><Stamp className={ic} /><ChevronDown className="-mr-[4px] size-[5px]" /></>],
    ["Image", <ImageIcon className={ic} />],
    ["Snapshot", <Glyph><path d="M1 3 H9.5 V11 M3 1 V9.5 H11" strokeDasharray="1.6 0.7" /></Glyph>],
  ];
  const cell = "flex h-4 w-full items-center justify-center";
  return (
    <nav className="flex w-[19px] shrink-0 flex-col border-l border-[#1f1f1f] bg-[#2b2b2b] text-[#c8c8c8]">
      <span className="mx-[3px] mt-px h-px bg-[#555]" />
      <div className="flex flex-col pt-[2px] pr-[2px]">
        {shapes.map(([label, icon]) => <button key={label} type="button" aria-label={label} className={cell}>{icon}</button>)}
      </div>
      <span className="mx-[2px] mt-[2px] h-px bg-[#555]" />
      <div className="flex flex-col pt-[2px]">
        {markups.map(([label, icon]) => <button key={label} type="button" aria-label={label} className={cell}>{icon}</button>)}
      </div>
    </nav>
  );
}

function StatusBar() {
  return (
    <footer className={"flex h-[17px] shrink-0 items-center border-t border-[#1d1d1d] bg-[#2e2e2e] pr-[8px] text-[#d2d2d2] " + small}>
      <span className="pl-px">Drag control points to resize, or drag cloud to move</span>
      <div className="ml-auto flex items-center">
        <NavButton label="Show grid"><Glyph><path d="M3.5 1.5 V10.5 M6 1.5 V10.5 M8.5 1.5 V10.5 M1.5 3.5 H10.5 M1.5 6 H10.5 M1.5 8.5 H10.5" /></Glyph></NavButton>
        <NavButton label="Snap to grid"><Glyph><path d="M3.5 1 V11 M6.5 1 V6 M9.5 1 V5 M1 3.5 H11 M1 6.5 H6 M1 9.5 H5 M10.5 7 H8 A1.8 1.8 0 0 0 8 10.8 H10.5" /></Glyph></NavButton>
        <NavButton label="Snap to content" active><Glyph><path d="M6 10.5 H2.5 V1.5 H6.5 L9 4 V5 M10.5 6.5 H8 A1.8 1.8 0 0 0 8 10.3 H10.5 M4 4 H6 M4 6 H6 M4 8 H5" /></Glyph></NavButton>
        <NavButton label="Snap to markup" active><Glyph><path d="M1.5 9.5 L5 4.5 L9.5 1.5 L8.5 5 M2 10 L5 8 M10.5 6.5 H7.5 A1.8 1.8 0 0 0 7.5 10.3 H10.5" /></Glyph></NavButton>
        <NavButton label="Reuse markup"><Glyph><path d="M1 10.5 L3 5.5 L9 1.5 L8 4 L4 9 Z" /><circle cx="8.5" cy="8.5" r="1.8" stroke="#2b84c6" /></Glyph></NavButton>
        <NavButton label="Sync view"><Glyph><path d="M1.5 2 H10.5 V10 H1.5 Z M4 4.8 H8.5 L7.5 3.8 M8 7.2 H3.5 L4.5 8.2" /></Glyph></NavButton>
        <ChevronDown className="size-[7px]" />
        <span className="ml-[9px]">9.525 cm = 30'-0"</span>
        <span className="ml-[10px]">106.68 x 76.20 cm</span>
        <span className="ml-[16px]">(8.93, 36.09)</span>
      </div>
    </footer>
  );
}

export default function App() {
  return (
    <div className="flex h-screen flex-col overflow-hidden bg-[#2b2b2b] select-none">
      <MenuBar />
      <PropertyBar />
      <div className="flex min-h-0 flex-1">
        <LeftRail />
        <ToolChest />
        <DocumentArea />
        <RightRail />
      </div>
      <StatusBar />
    </div>
  );
}
